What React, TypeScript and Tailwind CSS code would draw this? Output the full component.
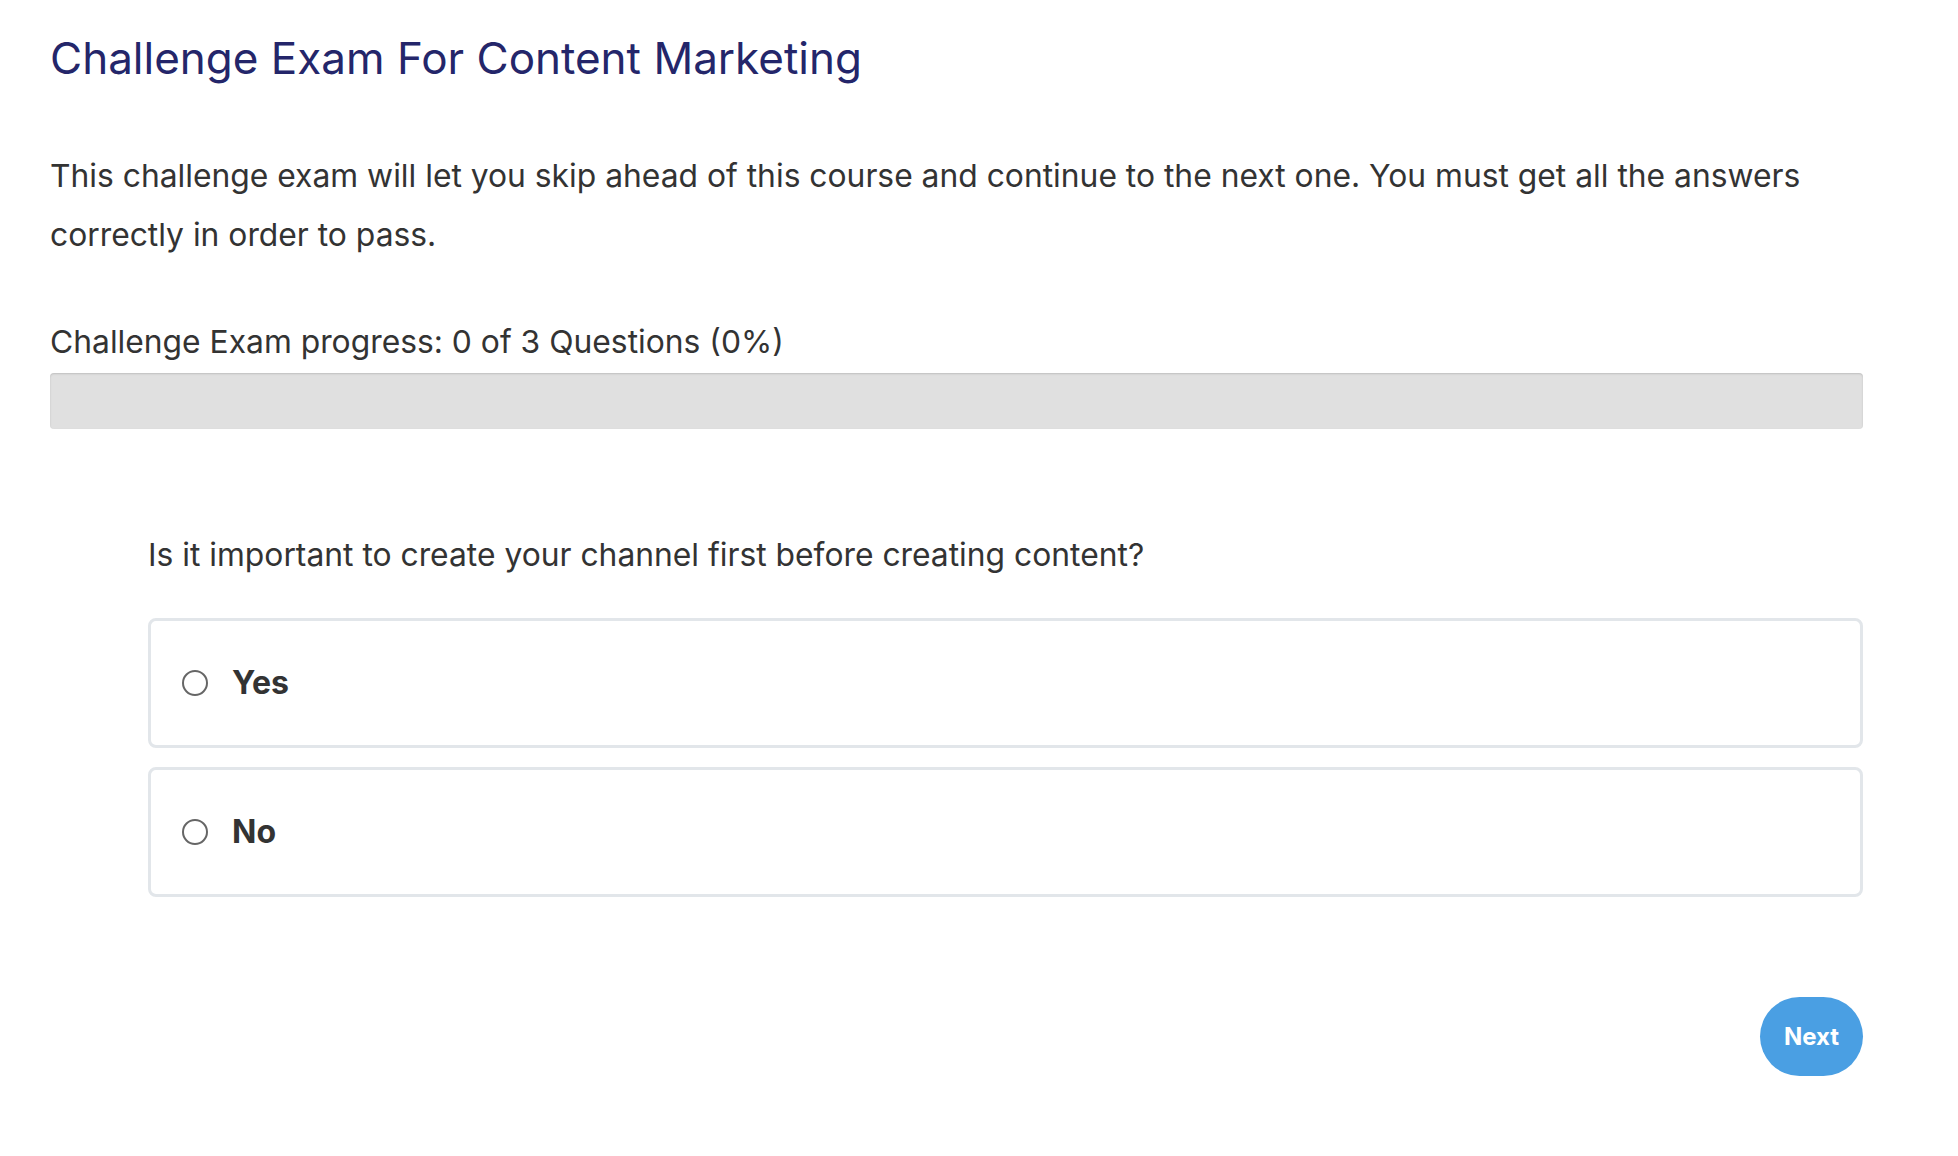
export default function App() {
  const opts = ["Yes", "No"];
  return (
    <div className="w-[1958px] h-[1156px] bg-white text-[#333] px-[50px]" style={{ fontFamily: "Inter, 'Noto Sans', sans-serif" }}>
      <h1 className="pt-[32px] text-[44px] leading-[52px] text-[#24266a] font-normal">Challenge Exam For Content Marketing</h1>
      <p className="mt-[62px] text-[31.8px] leading-[59px] w-[1840px]">
        This challenge exam will let you skip ahead of this course and continue to the next one. You must get all the answers correctly in order to pass.
      </p>
      <div className="mt-[58px] text-[31.8px] leading-[40px]">Challenge Exam progress: 0 of 3 Questions (0%)</div>
      <div className="mt-[11px] h-[56px] w-[1813px] rounded-[4px] bg-[#e0e0e0] shadow-[inset_0_1px_2px_rgba(0,0,0,0.15)]" />
      <div className="ml-[98px] w-[1715px]">
        <div className="mt-[106px] text-[31.8px] leading-[40px]">Is it important to create your channel first before creating content?</div>
        <div className="mt-[43px] flex flex-col gap-[19px]">
          {opts.map((o) => (
            <div key={o} className="h-[130px] border-[3px] border-[#e2e6ea] rounded-[8px] flex items-center pl-[31px]">
              <span className="w-[26px] h-[26px] rounded-full border-[2px] border-[#666] bg-white" />
              <span className="ml-[24px] text-[32px] font-bold text-[#333]">{o}</span>
            </div>
          ))}
        </div>
        <div className="mt-[100px] flex justify-end">
          <button className="w-[103px] h-[79px] rounded-full bg-[#4a9fe3] text-white font-bold text-[24px]">Next</button>
        </div>
      </div>
    </div>
  );
}
